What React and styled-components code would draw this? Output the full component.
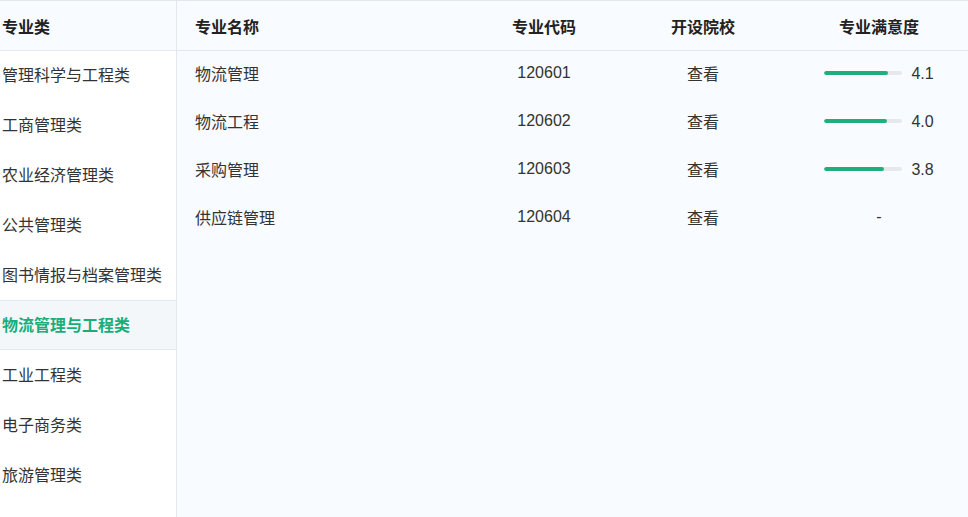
import React, { useState } from 'react';
import styled, { createGlobalStyle } from 'styled-components';

const GlobalStyle = createGlobalStyle`
  html, body {
    margin: 0;
    padding: 0;
    height: 100%;
  }
  body {
    font-family: "Liberation Sans", "Noto Sans CJK SC", sans-serif;
    color: #333;
    background: #fff;
  }
  #root {
    height: 100%;
  }
`;

const Page = styled.div`
  height: 100vh;
  display: flex;
  border-top: 1px solid #e3e8ef;
  box-sizing: border-box;
  overflow: hidden;
`;

const Sidebar = styled.div`
  width: 176px;
  flex-shrink: 0;
  background: #fff;
  border-right: 1px solid #e3e8ef;
  display: flex;
  flex-direction: column;
`;

const SideHeader = styled.div`
  height: 49px;
  display: flex;
  align-items: center;
  padding-left: 2px;
  background: #f8fbff;
  border-bottom: 1px solid #e3e8ef;
  font-size: 16px;
  font-weight: 700;
  color: #222;
`;

const SideList = styled.div`
  margin-top: -1px;
  display: flex;
  flex-direction: column;
`;

const SideItem = styled.div`
  height: 46px;
  padding: 0 0 2px 2px;
  display: flex;
  align-items: center;
  font-size: 16px;
  cursor: pointer;
  border-top: 1px solid ${p => (p.$active ? '#e3e8ef' : 'transparent')};
  border-bottom: 1px solid ${p => (p.$active ? '#e3e8ef' : 'transparent')};
  background: ${p => (p.$active ? '#f4f7fa' : 'transparent')};
  color: ${p => (p.$active ? '#1aad79' : '#333')};
  font-weight: ${p => (p.$active ? 700 : 400)};
`;

const Main = styled.div`
  flex: 1;
  background: #f8fbff;
  display: flex;
  flex-direction: column;
`;

const Row = styled.div`
  display: grid;
  grid-template-columns: 295px 144px 174px 1fr;
  align-items: center;
`;

const HeadRow = styled(Row)`
  height: 49px;
  border-bottom: 1px solid #e3e8ef;
  font-weight: 700;
  color: #222;
`;

const BodyRow = styled(Row)`
  height: 44px;
  padding-bottom: 4px;
`;

const Cell = styled.div`
  font-size: 16px;
  text-align: ${p => (p.$left ? 'left' : 'center')};
  padding-left: ${p => (p.$left ? '18px' : '0')};
`;

const Score = styled.div`
  display: flex;
  align-items: center;
  justify-content: center;
  gap: 9px;
  font-size: 16px;
`;

const ScoreText = styled.span`
  position: relative;
  top: 1px;
`;

const Track = styled.div`
  width: 78px;
  height: 4px;
  border-radius: 2px;
  background: #e6e8eb;
  overflow: hidden;
`;

const Fill = styled.div`
  height: 100%;
  border-radius: 2px;
  background: #1eb07b;
`;

const categories = [
  '管理科学与工程类',
  '工商管理类',
  '农业经济管理类',
  '公共管理类',
  '图书情报与档案管理类',
  '物流管理与工程类',
  '工业工程类',
  '电子商务类',
  '旅游管理类',
];

const majors = [
  { name: '物流管理', code: '120601', score: 4.1 },
  { name: '物流工程', code: '120602', score: 4.0 },
  { name: '采购管理', code: '120603', score: 3.8 },
  { name: '供应链管理', code: '120604', score: null },
];

export default function App() {
  const [active, setActive] = useState(5);

  return (
    <>
      <GlobalStyle />
      <Page>
        <Sidebar>
          <SideHeader>专业类</SideHeader>
          <SideList>
            {categories.map((c, i) => (
              <SideItem key={c} $active={i === active} onClick={() => setActive(i)}>
                {c}
              </SideItem>
            ))}
          </SideList>
        </Sidebar>
        <Main>
          <HeadRow>
            <Cell $left>专业名称</Cell>
            <Cell>专业代码</Cell>
            <Cell>开设院校</Cell>
            <Cell>专业满意度</Cell>
          </HeadRow>
          {majors.map(m => (
            <BodyRow key={m.code}>
              <Cell $left>{m.name}</Cell>
              <Cell>{m.code}</Cell>
              <Cell>查看</Cell>
              <Cell>
                {m.score == null ? (
                  '-'
                ) : (
                  <Score>
                    <Track>
                      <Fill style={{ width: `${(m.score / 5) * 100}%` }} />
                    </Track>
                    <ScoreText>{m.score.toFixed(1)}</ScoreText>
                  </Score>
                )}
              </Cell>
            </BodyRow>
          ))}
        </Main>
      </Page>
    </>
  );
}
